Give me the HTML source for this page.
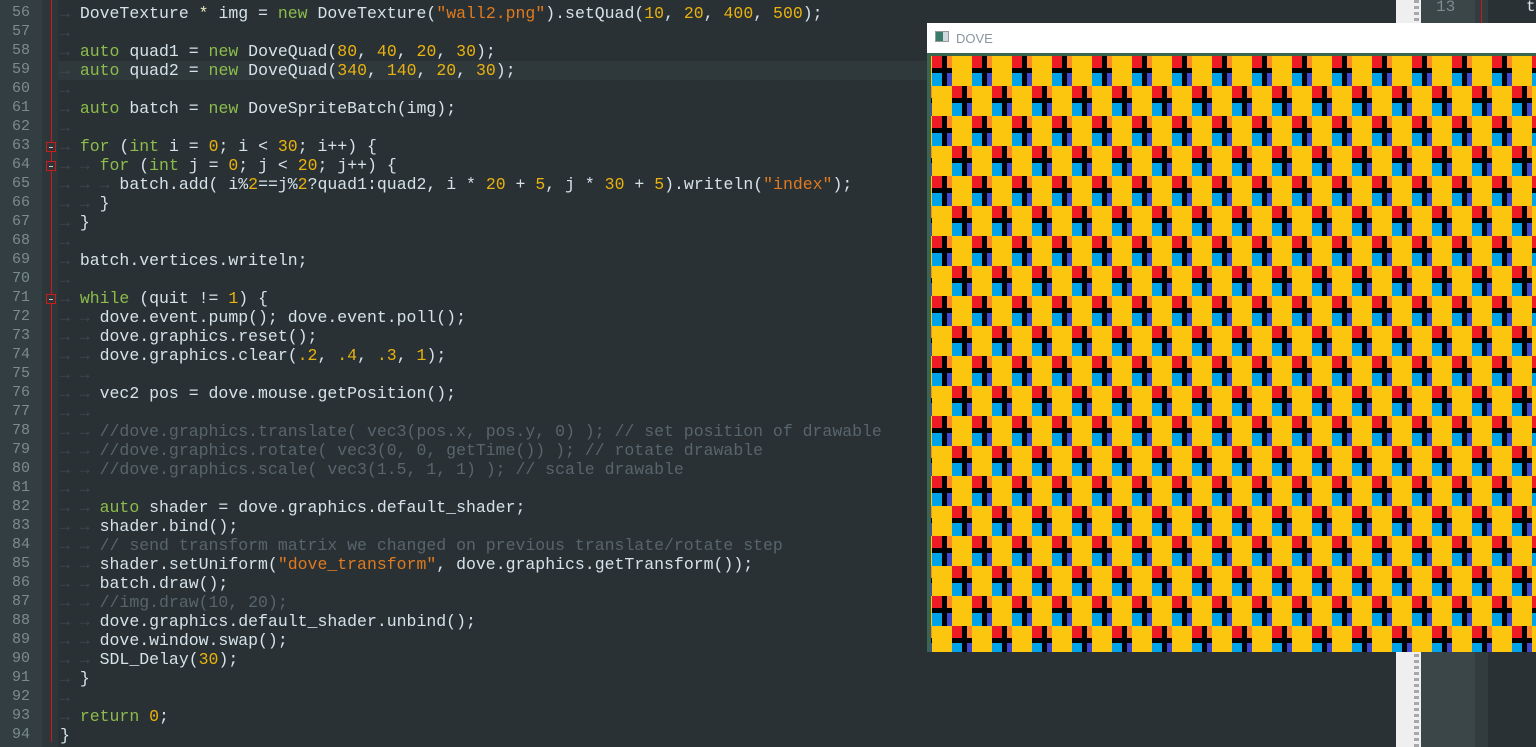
<!DOCTYPE html>
<html><head><meta charset="utf-8"><style>
*{margin:0;padding:0;box-sizing:border-box}
body{width:1536px;height:747px;overflow:hidden;background:#293134;position:relative;font-family:"Liberation Mono",monospace}
#gut{position:absolute;left:0;top:0;width:42px;height:747px;background:#333e42}
#fold{position:absolute;left:42px;top:0;width:16px;height:747px;background:#2d373a}
#redl{position:absolute;left:51px;top:0;width:1px;height:742px;background:#d01818}
.ln{position:absolute;left:0;width:30px;text-align:right;color:#7b8b90;font-size:15px}
#code{position:absolute;left:60px;top:4px;font-size:16.5px;line-height:19px;color:#d5e2ea;white-space:pre}
#hl{position:absolute;left:58px;top:61px;width:870px;height:19px;background:#2f393c}
.k{color:#8cbc4c}.n{color:#e9b20e}.s{color:#e07a1f}.c{color:#58656c}.t{color:#3e4a4f}.o{color:#e9e4c0}
.fb{position:absolute;left:46px;width:10px;height:10px;border:1px solid #d01818;background:#2d373a}
.fb:after{content:"";position:absolute;left:2px;top:4px;width:4px;height:1px;background:#ccc}
#win{position:absolute;left:927px;top:23px;width:609px;height:629px;background:#3a6650}
#title{position:absolute;left:0;top:0;width:609px;height:30px;background:#fff;font-family:"Liberation Sans",sans-serif;font-size:13px;color:#8a95a0}
#sb{position:absolute;left:1396px;top:0;width:25px;height:747px;background:#efefef}
#sb2{position:absolute;left:1414px;top:0;width:5px;height:747px;background:repeating-linear-gradient(#a8a8a8 0 3px,transparent 3px 6px)}
</style></head><body>
<div id="gut"></div><div id="fold"></div><div id="redl"></div><div id="hl"></div>
<div class="fb" style="top:142px"></div><div class="fb" style="top:161px"></div><div class="fb" style="top:294px"></div>
<div id="lns"></div>
<div class="ln" style="top:4px">56</div><div class="ln" style="top:23px">57</div><div class="ln" style="top:42px">58</div><div class="ln" style="top:61px">59</div><div class="ln" style="top:80px">60</div><div class="ln" style="top:99px">61</div><div class="ln" style="top:118px">62</div><div class="ln" style="top:137px">63</div><div class="ln" style="top:156px">64</div><div class="ln" style="top:175px">65</div><div class="ln" style="top:194px">66</div><div class="ln" style="top:213px">67</div><div class="ln" style="top:232px">68</div><div class="ln" style="top:251px">69</div><div class="ln" style="top:270px">70</div><div class="ln" style="top:289px">71</div><div class="ln" style="top:308px">72</div><div class="ln" style="top:327px">73</div><div class="ln" style="top:346px">74</div><div class="ln" style="top:365px">75</div><div class="ln" style="top:384px">76</div><div class="ln" style="top:403px">77</div><div class="ln" style="top:422px">78</div><div class="ln" style="top:441px">79</div><div class="ln" style="top:460px">80</div><div class="ln" style="top:479px">81</div><div class="ln" style="top:498px">82</div><div class="ln" style="top:517px">83</div><div class="ln" style="top:536px">84</div><div class="ln" style="top:555px">85</div><div class="ln" style="top:574px">86</div><div class="ln" style="top:593px">87</div><div class="ln" style="top:612px">88</div><div class="ln" style="top:631px">89</div><div class="ln" style="top:650px">90</div><div class="ln" style="top:669px">91</div><div class="ln" style="top:688px">92</div><div class="ln" style="top:707px">93</div><div class="ln" style="top:726px">94</div>
<div id="code"><span class="t">→ </span>DoveTexture <span class="o">*</span> img = <span class="k">new</span> DoveTexture(<span class="s">"wall2.png"</span>).setQuad(<span class="n">10</span>, <span class="n">20</span>, <span class="n">400</span>, <span class="n">500</span>);
<span class="t">→ </span>
<span class="t">→ </span><span class="k">auto</span> quad1 = <span class="k">new</span> DoveQuad(<span class="n">80</span>, <span class="n">40</span>, <span class="n">20</span>, <span class="n">30</span>);
<span class="t">→ </span><span class="k">auto</span> quad2 = <span class="k">new</span> DoveQuad(<span class="n">340</span>, <span class="n">140</span>, <span class="n">20</span>, <span class="n">30</span>);
<span class="t">→ </span>
<span class="t">→ </span><span class="k">auto</span> batch = <span class="k">new</span> DoveSpriteBatch(img);
<span class="t">→ </span>
<span class="t">→ </span><span class="k">for</span> (<span class="k">int</span> i = <span class="n">0</span>; i &lt; <span class="n">30</span>; i++) {
<span class="t">→ → </span><span class="k">for</span> (<span class="k">int</span> j = <span class="n">0</span>; j &lt; <span class="n">20</span>; j++) {
<span class="t">→ → → </span>batch.add( i%<span class="n">2</span>==j%<span class="n">2</span>?quad1:quad2, i * <span class="n">20</span> + <span class="n">5</span>, j * <span class="n">30</span> + <span class="n">5</span>).writeln(<span class="s">"index"</span>);
<span class="t">→ → </span>}
<span class="t">→ </span>}
<span class="t">→ </span>
<span class="t">→ </span>batch.vertices.writeln;
<span class="t">→ </span>
<span class="t">→ </span><span class="k">while</span> (quit != <span class="n">1</span>) {
<span class="t">→ → </span>dove.event.pump(); dove.event.poll();
<span class="t">→ → </span>dove.graphics.reset();
<span class="t">→ → </span>dove.graphics.clear(<span class="n">.2</span>, <span class="n">.4</span>, <span class="n">.3</span>, <span class="n">1</span>);
<span class="t">→ → </span>
<span class="t">→ → </span>vec2 pos = dove.mouse.getPosition();
<span class="t">→ → </span>
<span class="t">→ → </span><span class="c">//dove.graphics.translate( vec3(pos.x, pos.y, 0) ); // set position of drawable</span>
<span class="t">→ → </span><span class="c">//dove.graphics.rotate( vec3(0, 0, getTime()) ); // rotate drawable</span>
<span class="t">→ → </span><span class="c">//dove.graphics.scale( vec3(1.5, 1, 1) ); // scale drawable</span>
<span class="t">→ → </span>
<span class="t">→ → </span><span class="k">auto</span> shader = dove.graphics.default_shader;
<span class="t">→ → </span>shader.bind();
<span class="t">→ → </span><span class="c">// send transform matrix we changed on previous translate/rotate step</span>
<span class="t">→ → </span>shader.setUniform(<span class="s">"dove_transform"</span>, dove.graphics.getTransform());
<span class="t">→ → </span>batch.draw();
<span class="t">→ → </span><span class="c">//img.draw(10, 20);</span>
<span class="t">→ → </span>dove.graphics.default_shader.unbind();
<span class="t">→ → </span>dove.window.swap();
<span class="t">→ → </span>SDL_Delay(<span class="n">30</span>);
<span class="t">→ </span>}
<span class="t">→ </span>
<span class="t">→ </span><span class="k">return</span> <span class="n">0</span>;
}</div>
<div id="sb"></div><div id="sb2"></div>
<div style="position:absolute;left:1421px;top:0;width:54px;height:747px;background:#3b4649"></div>
<div style="position:absolute;left:1475px;top:0;width:13px;height:747px;background:#323c3f"></div>
<div style="position:absolute;left:1481px;top:0;width:1px;height:24px;background:#d01818"></div>
<div style="position:absolute;left:1436px;top:-2px;font-size:16px;color:#7b8b90;font-family:'Liberation Mono',monospace">13</div>
<div style="position:absolute;left:1526px;top:-2px;font-size:16px;color:#d5e2ea;font-family:'Liberation Mono',monospace">t</div>
<div id="win">
<div id="title"><div style="position:absolute;left:8px;top:8px;width:14px;height:11px;border:1px solid #999;background:linear-gradient(90deg,#3a7a6a 0 60%,#cfd8dc 60%)"></div><span style="position:absolute;left:29px;top:8px">DOVE</span></div>
<svg style="position:absolute;left:4px;top:33px" width="605" height="596">
<defs><pattern id="p" x="1" y="0" width="40" height="60" patternUnits="userSpaceOnUse">
<rect width="40" height="60" fill="#fcc60e"/>
<g id="q"><rect x="0" y="0" width="10" height="12" fill="#ee1c24"/><rect x="15" y="0" width="5" height="12" fill="#ff8526"/><rect x="0" y="17" width="10" height="13" fill="#00a2e8"/><rect x="15" y="17" width="5" height="13" fill="#3f48cc"/><rect x="10" y="0" width="5" height="30" fill="#000"/><rect x="0" y="12" width="20" height="5" fill="#000"/></g>
<use href="#q" x="20" y="30"/>
</pattern></defs>
<rect width="605" height="596" fill="url(#p)"/></svg>
</div>
</body></html>
